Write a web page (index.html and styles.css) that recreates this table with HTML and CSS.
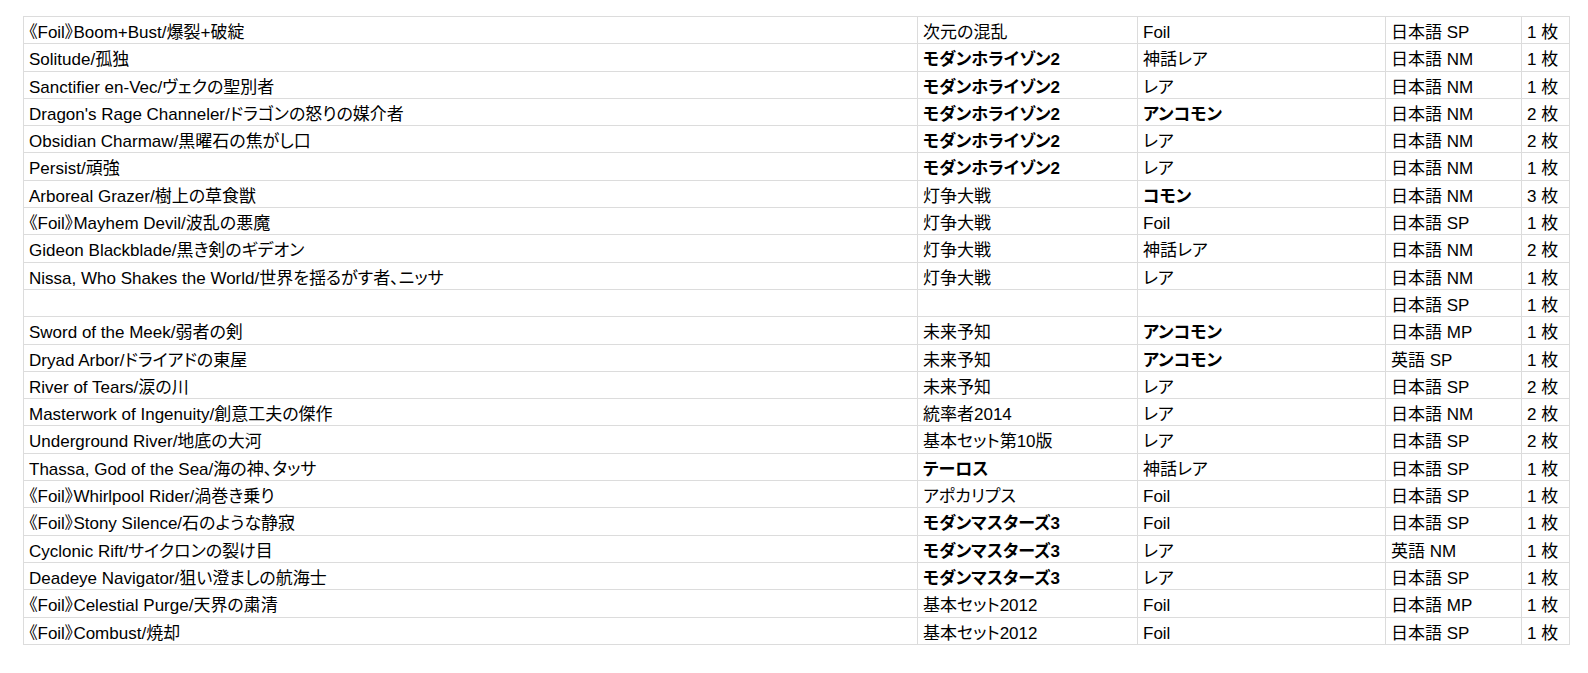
FILE: index.html
```html
<!DOCTYPE html>
<html lang="ja">
<head>
<meta charset="utf-8">
<title>カードリスト</title>
<link rel="stylesheet" href="styles.css">
</head>
<body>
<table class="cards">
  <colgroup>
    <col class="c-name"><col class="c-set"><col class="c-rarity"><col class="c-cond"><col class="c-qty">
  </colgroup>
  <tbody>
    <tr><td>《Foil》Boom+Bust/爆裂+破綻</td><td>次元の混乱</td><td>Foil</td><td>日本語 SP</td><td>1 枚</td></tr>
    <tr><td>Solitude/孤独</td><td class="b">モダンホライゾン2</td><td>神話レア</td><td>日本語 NM</td><td>1 枚</td></tr>
    <tr><td>Sanctifier en-Vec/ヴェクの聖別者</td><td class="b">モダンホライゾン2</td><td>レア</td><td>日本語 NM</td><td>1 枚</td></tr>
    <tr><td>Dragon's Rage Channeler/ドラゴンの怒りの媒介者</td><td class="b">モダンホライゾン2</td><td class="b">アンコモン</td><td>日本語 NM</td><td>2 枚</td></tr>
    <tr><td>Obsidian Charmaw/黒曜石の焦がし口</td><td class="b">モダンホライゾン2</td><td>レア</td><td>日本語 NM</td><td>2 枚</td></tr>
    <tr><td>Persist/頑強</td><td class="b">モダンホライゾン2</td><td>レア</td><td>日本語 NM</td><td>1 枚</td></tr>
    <tr><td>Arboreal Grazer/樹上の草食獣</td><td>灯争大戦</td><td class="b">コモン</td><td>日本語 NM</td><td>3 枚</td></tr>
    <tr><td>《Foil》Mayhem Devil/波乱の悪魔</td><td>灯争大戦</td><td>Foil</td><td>日本語 SP</td><td>1 枚</td></tr>
    <tr><td>Gideon Blackblade/黒き剣のギデオン</td><td>灯争大戦</td><td>神話レア</td><td>日本語 NM</td><td>2 枚</td></tr>
    <tr><td>Nissa, Who Shakes the World/世界を揺るがす者、ニッサ</td><td>灯争大戦</td><td>レア</td><td>日本語 NM</td><td>1 枚</td></tr>
    <tr><td></td><td></td><td></td><td>日本語 SP</td><td>1 枚</td></tr>
    <tr><td>Sword of the Meek/弱者の剣</td><td>未来予知</td><td class="b">アンコモン</td><td>日本語 MP</td><td>1 枚</td></tr>
    <tr><td>Dryad Arbor/ドライアドの東屋</td><td>未来予知</td><td class="b">アンコモン</td><td>英語 SP</td><td>1 枚</td></tr>
    <tr><td>River of Tears/涙の川</td><td>未来予知</td><td>レア</td><td>日本語 SP</td><td>2 枚</td></tr>
    <tr><td>Masterwork of Ingenuity/創意工夫の傑作</td><td>統率者2014</td><td>レア</td><td>日本語 NM</td><td>2 枚</td></tr>
    <tr><td>Underground River/地底の大河</td><td>基本セット第10版</td><td>レア</td><td>日本語 SP</td><td>2 枚</td></tr>
    <tr><td>Thassa, God of the Sea/海の神、タッサ</td><td class="b">テーロス</td><td>神話レア</td><td>日本語 SP</td><td>1 枚</td></tr>
    <tr><td>《Foil》Whirlpool Rider/渦巻き乗り</td><td>アポカリプス</td><td>Foil</td><td>日本語 SP</td><td>1 枚</td></tr>
    <tr><td>《Foil》Stony Silence/石のような静寂</td><td class="b">モダンマスターズ3</td><td>Foil</td><td>日本語 SP</td><td>1 枚</td></tr>
    <tr><td>Cyclonic Rift/サイクロンの裂け目</td><td class="b">モダンマスターズ3</td><td>レア</td><td>英語 NM</td><td>1 枚</td></tr>
    <tr><td>Deadeye Navigator/狙い澄ましの航海士</td><td class="b">モダンマスターズ3</td><td>レア</td><td>日本語 SP</td><td>1 枚</td></tr>
    <tr><td>《Foil》Celestial Purge/天界の粛清</td><td>基本セット2012</td><td>Foil</td><td>日本語 MP</td><td>1 枚</td></tr>
    <tr><td>《Foil》Combust/焼却</td><td>基本セット2012</td><td>Foil</td><td>日本語 SP</td><td>1 枚</td></tr>
  </tbody>
</table>
</body>
</html>
```

FILE: styles.css
```css
html, body {
  margin: 0;
  padding: 0;
  background: #ffffff;
}

body {
  font-family: "Liberation Sans", "Noto Sans CJK JP", sans-serif;
  font-size: 17px;
  color: #000000;
  font-feature-settings: "palt";
}

.cards {
  margin: 16px 0 0 23px;
  width: 1546px;
  table-layout: fixed;
  border-collapse: collapse;
}

.c-name { width: 894px; }
.c-set { width: 220px; }
.c-rarity { width: 248px; }
.c-cond { width: 136px; }
.c-qty { width: 48px; }

.cards td {
  border: 1px solid #dcdcdc;
  padding: 6px 5px 1px 5px;
  line-height: 19.3px;
  white-space: nowrap;
  overflow: hidden;
  vertical-align: middle;
}

.cards td.b {
  font-weight: bold;
}
```
